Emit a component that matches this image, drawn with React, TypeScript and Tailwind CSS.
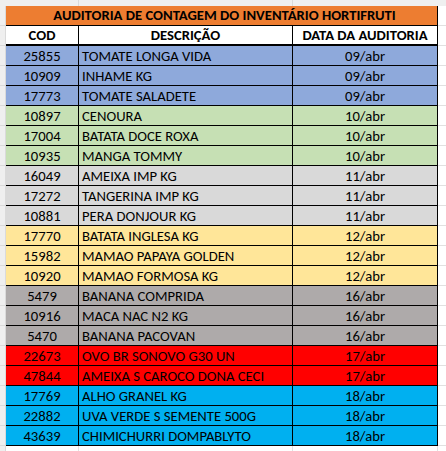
const ROWS: { cod: string; desc: string; date: string; bg: string }[] = [
  { cod: "25855", desc: "TOMATE LONGA VIDA", date: "09/abr", bg: "bg-[#8ea9db]" },
  { cod: "10909", desc: "INHAME KG", date: "09/abr", bg: "bg-[#8ea9db]" },
  { cod: "17773", desc: "TOMATE SALADETE", date: "09/abr", bg: "bg-[#8ea9db]" },
  { cod: "10897", desc: "CENOURA", date: "10/abr", bg: "bg-[#c6e0b4]" },
  { cod: "17004", desc: "BATATA DOCE ROXA", date: "10/abr", bg: "bg-[#c6e0b4]" },
  { cod: "10935", desc: "MANGA TOMMY", date: "10/abr", bg: "bg-[#c6e0b4]" },
  { cod: "16049", desc: "AMEIXA IMP KG", date: "11/abr", bg: "bg-[#d9d9d9]" },
  { cod: "17272", desc: "TANGERINA IMP KG", date: "11/abr", bg: "bg-[#d9d9d9]" },
  { cod: "10881", desc: "PERA DONJOUR KG", date: "11/abr", bg: "bg-[#d9d9d9]" },
  { cod: "17770", desc: "BATATA INGLESA KG", date: "12/abr", bg: "bg-[#ffe699]" },
  { cod: "15982", desc: "MAMAO PAPAYA GOLDEN", date: "12/abr", bg: "bg-[#ffe699]" },
  { cod: "10920", desc: "MAMAO FORMOSA KG", date: "12/abr", bg: "bg-[#ffe699]" },
  { cod: "5479", desc: "BANANA COMPRIDA", date: "16/abr", bg: "bg-[#aeaaaa]" },
  { cod: "10916", desc: "MACA NAC N2 KG", date: "16/abr", bg: "bg-[#aeaaaa]" },
  { cod: "5470", desc: "BANANA PACOVAN", date: "16/abr", bg: "bg-[#aeaaaa]" },
  { cod: "22673", desc: "OVO BR SONOVO G30 UN", date: "17/abr", bg: "bg-[#ff0000]" },
  { cod: "47844", desc: "AMEIXA S CAROCO DONA CECI", date: "17/abr", bg: "bg-[#ff0000]" },
  { cod: "17769", desc: "ALHO GRANEL KG", date: "18/abr", bg: "bg-[#00b0f0]" },
  { cod: "22882", desc: "UVA VERDE S SEMENTE 500G", date: "18/abr", bg: "bg-[#00b0f0]" },
  { cod: "43639", desc: "CHIMICHURRI DOMPABLYTO", date: "18/abr", bg: "bg-[#00b0f0]" },
];

// sheet margin cells around the table (Excel gridlines)
function Edge({ left }: { left?: boolean }) {
  return (
    <div
      className={
        left
          ? "w-[6px] shrink-0 border-r border-b border-[#dadada] bg-[#efefef]"
          : "w-[8px] shrink-0 border-b border-[#e1e1e1] bg-white"
      }
    />
  );
}

export default function App() {
  return (
    <div className="w-[446px] h-[451px] overflow-hidden bg-white font-['Carlito','Calibri','Liberation_Sans',sans-serif] text-[14.67px] leading-none text-black">
      {/* top strip */}
      <div className="flex h-[6px] bg-[#efefef]">
        <div className="w-[79px] border-r border-[#dadada]" />
        <div className="w-[214px] border-r border-[#dadada]" />
        <div className="flex-1" />
      </div>

      {/* title */}
      <div className="flex h-[20px]">
        <Edge left />
        <div className="flex w-[432px] items-end justify-center border-r border-b border-black bg-[#ed7d31] pb-[2px] pl-[6px] font-bold">
          AUDITORIA DE CONTAGEM DO INVENTÁRIO HORTIFRUTI
        </div>
        <Edge />
      </div>

      {/* column headers */}
      <div className="flex h-[20px] font-bold">
        <Edge left />
        <div className="flex w-[73px] items-end justify-center border-r border-b-2 border-black bg-white pb-[1px]">
          COD
        </div>
        <div className="flex w-[214px] items-end justify-center border-r border-b-2 border-black bg-white pb-[1px]">
          DESCRIÇÃO
        </div>
        <div className="flex w-[145px] items-end justify-center border-r border-b-2 border-black bg-white pb-[1px]">
          DATA DA AUDITORIA
        </div>
        <Edge />
      </div>

      {ROWS.map((r) => (
        <div key={r.cod} className="flex h-[20px]">
          <Edge left />
          <div className={`flex w-[73px] items-end justify-center border-r border-b border-black pb-[1px] ${r.bg}`}>
            {r.cod}
          </div>
          <div className={`flex w-[214px] items-end overflow-hidden whitespace-nowrap border-r border-b border-black pb-[1px] pl-[3px] ${r.bg}`}>
            {r.desc}
          </div>
          <div className={`flex w-[145px] items-end justify-center border-r border-b border-black pb-[1px] ${r.bg}`}>
            {r.date}
          </div>
          <Edge />
        </div>
      ))}

      {/* below table */}
      <div className="flex h-[5px]">
        <div className="w-[6px] border-r border-[#dadada] bg-[#efefef]" />
        <div className="w-[73px] border-r border-[#e1e1e1]" />
        <div className="w-[214px] border-r border-[#e1e1e1]" />
        <div className="w-[145px] border-r border-[#e1e1e1]" />
      </div>
    </div>
  );
}
